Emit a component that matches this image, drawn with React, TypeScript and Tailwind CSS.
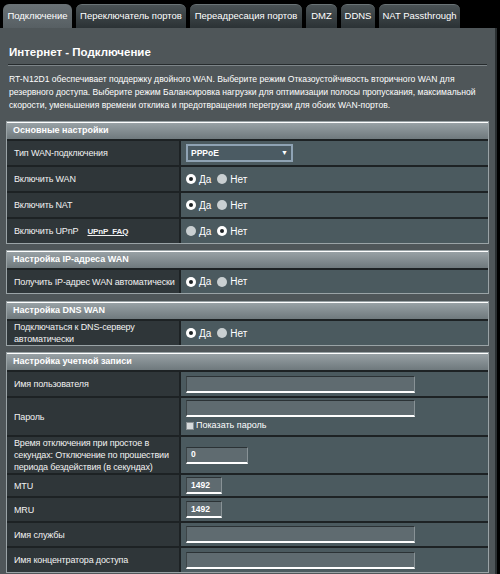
import React from "react";

const tabs = [
  { name: "Подключение", w: "w-[69px]", active: true },
  { name: "Переключатель портов", w: "w-[110px]" },
  { name: "Переадресация портов", w: "w-[112px]" },
  { name: "DMZ", w: "w-[31px]" },
  { name: "DDNS", w: "w-[34px]" },
  { name: "NAT Passthrough", w: "w-[81px]" },
];

function Radio({ on }: { on?: boolean }) {
  if (on)
    return (
      <span className="inline-flex w-[10px] h-[10px] rounded-full bg-white items-center justify-center">
        <span className="w-[4px] h-[4px] rounded-full bg-[#1c2224]" />
      </span>
    );
  return <span className="inline-block w-[10px] h-[10px] rounded-full bg-[#c9cfd1]" />;
}

function YesNo({ yes = true }: { yes?: boolean }) {
  return (
    <div className="flex items-center text-[10px] text-white">
      <Radio on={yes} />
      <span className="ml-[3px] mr-[6px]">Да</span>
      <Radio on={!yes} />
      <span className="ml-[3px]">Нет</span>
    </div>
  );
}

function Input({ w, value }: { w: string; value?: string }) {
  return (
    <div
      className={
        w +
        " h-[17px] bg-[#5f6b70] border-t border-t-[#2b3235] border-b-2 border-b-white border-l border-l-[#3c4447] border-r border-r-[#889296] flex items-center pl-[4px] text-[8.5px] font-bold text-white"
      }
    >
      {value}
    </div>
  );
}

function Row({ label, h, children }: { label: React.ReactNode; h: string; children?: React.ReactNode }) {
  return (
    <div className={"flex border-t-2 border-[#1d2224] " + h}>
      <div className="w-[172px] bg-[#2f3639] flex items-center pl-[7px] pr-0 text-[9px] leading-[12px] tracking-[-0.15px] text-[#f2f2f2]">
        {label}
      </div>
      <div className="flex-1 bg-[#4b5a5f] border-l-2 border-[#1d2224] flex flex-col justify-center pl-[5px]">
        {children}
      </div>
    </div>
  );
}

function Section({ title, children, className = "" }: { title: string; children: React.ReactNode; className?: string }) {
  return (
    <div className={"border border-[#9aa3a6] " + className}>
      <div className="h-[17px] bg-gradient-to-b from-[#98a1a5] to-[#6f797d] border-t border-white flex items-center pl-[6px] text-[9px] font-bold text-white">
        {title}
      </div>
      {children}
    </div>
  );
}

export default function App() {
  return (
    <div className="w-[500px] h-[574px] bg-black overflow-hidden font-['Liberation_Sans',Arial,sans-serif]">
      <div className="flex items-end h-[28px] pl-[3px] gap-[4px]">
        {tabs.map((t) => (
          <div
            key={t.name}
            className={
              t.w +
              " h-[24px] rounded-t-[6px] flex items-center justify-center text-[9.5px] text-white whitespace-nowrap " +
              (t.active
                ? "bg-gradient-to-b from-[#6a7276] to-[#575f63]"
                : "bg-gradient-to-b from-[#4a5255] to-[#2b3235] border-t border-[#6a7376]")
            }
          >
            {t.name}
          </div>
        ))}
      </div>
      <div className="w-[497px] h-[546px] bg-[#4f5659] px-[6px] border-r-2 border-[#2a2f31]">
        <div className="pt-[17px] pl-[3px] text-[11.5px] font-bold text-white leading-[14px]">
          Интернет - Подключение
        </div>
        <div className="mt-[5px] mx-[2px] h-[2px] border-t border-[#262b2d] border-b border-b-[#7d8589]" />
        <p className="mt-[7px] pl-[3px] pr-[2px] text-[8.6px] leading-[13px] text-white">
          RT-N12D1 обеспечивает поддержку двойного WAN. Выберите режим Отказоустойчивость вторичного WAN для
          резервного доступа. Выберите режим Балансировка нагрузки для оптимизации полосы пропускания, максимальной
          скорости, уменьшения времени отклика и предотвращения перегрузки для обоих WAN-портов.
        </p>
        <Section title="Основные настройки" className="mt-[9px]">
          <Row label="Тип WAN-подключения" h="h-[26px]">
            <div className="w-[107px] h-[18px] border-2 border-[#8fa3b4] bg-[#4b5b63] flex items-center justify-between px-[3px] text-[8.5px] font-bold text-white">
              <span>PPPoE</span>
              <span className="text-[7px]">▼</span>
            </div>
          </Row>
          <Row label="Включить WAN" h="h-[26px]">
            <YesNo />
          </Row>
          <Row label="Включить NAT" h="h-[26px]">
            <YesNo />
          </Row>
          <Row
            label={
              <span>
                Включить UPnP
                <span className="ml-[9px] text-[8px] font-bold underline">UPnP&nbsp;&nbsp;FAQ</span>
              </span>
            }
            h="h-[26px]"
          >
            <YesNo yes={false} />
          </Row>
        </Section>
        <Section title="Настройка IP-адреса WAN" className="mt-[6px]">
          <Row label="Получить IP-адрес WAN автоматически" h="h-[25px]">
            <YesNo />
          </Row>
        </Section>
        <Section title="Настройка DNS WAN" className="mt-[7px]">
          <Row label="Подключаться к DNS-серверу автоматически" h="h-[26px]">
            <YesNo />
          </Row>
        </Section>
        <Section title="Настройка учетной записи" className="mt-[6px]">
          <Row label="Имя пользователя" h="h-[26px]">
            <Input w="w-[229px]" />
          </Row>
          <Row label="Пароль" h="h-[39px]">
            <Input w="w-[229px]" />
            <div className="flex items-center mt-[2px] text-[9px] text-white">
              <span className="w-[8px] h-[8px] bg-[#d7dbdc] border border-[#8a9194] mr-[2px]" />
              Показать пароль
            </div>
          </Row>
          <Row label="Время отключения при простое в секундах: Отключение по прошествии периода бездействия (в секундах)" h="h-[38px]">
            <Input w="w-[62px]" value="0" />
          </Row>
          <Row label="MTU" h="h-[23px]">
            <Input w="w-[36px]" value="1492" />
          </Row>
          <Row label="MRU" h="h-[25px]">
            <Input w="w-[36px]" value="1492" />
          </Row>
          <Row label="Имя службы" h="h-[25px]">
            <Input w="w-[229px]" />
          </Row>
          <Row label="Имя концентратора доступа" h="h-[26px]">
            <Input w="w-[229px]" />
          </Row>
        </Section>
      </div>
    </div>
  );
}
